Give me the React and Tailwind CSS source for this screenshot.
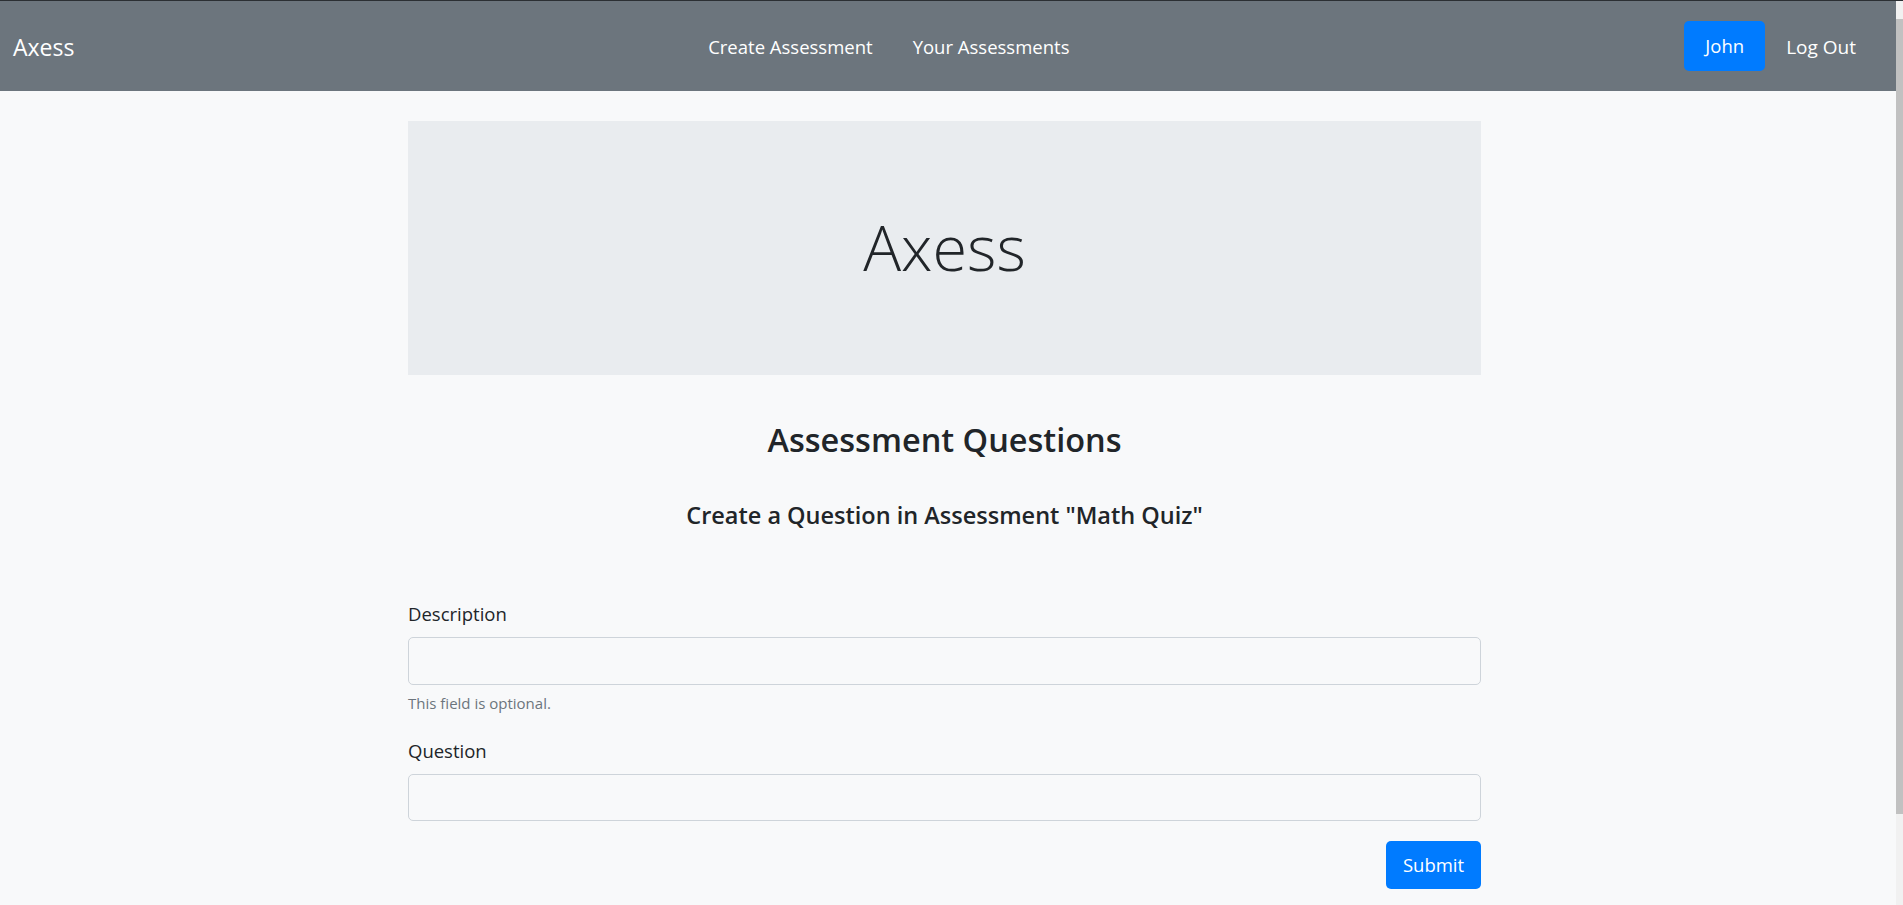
export default function App() {
  return (
    <div
      className="flex h-[905px] overflow-hidden border-t border-[#2b2f33] bg-[#f8f9fa] text-[#212529]"
      style={{ fontFamily: '"Open Sans", "Noto Sans", sans-serif' }}
    >
      <div className="flex flex-1 flex-col">
        {/* navbar */}
        <nav className="flex h-[90px] items-center bg-[#6c757d] pt-[2px] text-white">
          <a className="ml-[13px] mr-[19px] text-[23px] leading-none">Axess</a>
          <ul className="mx-auto flex text-[18.5px]">
            <li><a className="px-[20px]">Create Assessment</a></li>
            <li><a className="px-[20px]">Your Assessments</a></li>
          </ul>
          <div className="mr-[19px] flex items-center text-[18.5px]">
            <button className="-mt-[2px] h-[50px] w-[81px] rounded-[5px] bg-[#007bff] text-white">John</button>
            <a className="px-[21px] text-[19px]">Log Out</a>
          </div>
        </nav>

        <main className="ml-[408px] w-[1073px]">
          <div className="mt-[30px] flex h-[254px] items-center justify-center bg-[#e9ecef] pb-[4px]">
            <h1 className="text-[63px] font-light leading-none">Axess</h1>
          </div>

          <h2 className="mt-[42px] text-center text-[32.5px] font-semibold leading-[46px]">
            Assessment Questions
          </h2>
          <h4 className="mt-[35px] text-center text-[23.5px] font-semibold leading-[34px]">
            Create a Question in Assessment "Math Quiz"
          </h4>

          <form className="flex flex-col">
            <label className="mt-[70px] text-[18.5px] leading-[24px]">Description</label>
            <input className="mt-[11px] h-[48px] rounded-[5px] border border-[#ced4da] bg-transparent px-3" />
            <small className="mt-[8px] text-[15px] leading-[20px] text-[#6c757d]">This field is optional.</small>

            <label className="mt-[26px] text-[18.5px] leading-[24px]">Question</label>
            <input className="mt-[11px] h-[47px] rounded-[5px] border border-[#ced4da] bg-transparent px-3" />

            <div className="mt-[20px] flex justify-end">
              <button
                type="button"
                className="h-[48px] w-[95px] rounded-[5px] bg-[#007bff] text-[18.5px] text-white"
              >
                Submit
              </button>
            </div>
          </form>
        </main>
      </div>

      {/* page scrollbar */}
      <div className="flex w-[7px] flex-col bg-[#f1f1f1] pt-[18px]">
        <div className="h-[795px] bg-[#c1c1c1]" />
      </div>
    </div>
  )
}
